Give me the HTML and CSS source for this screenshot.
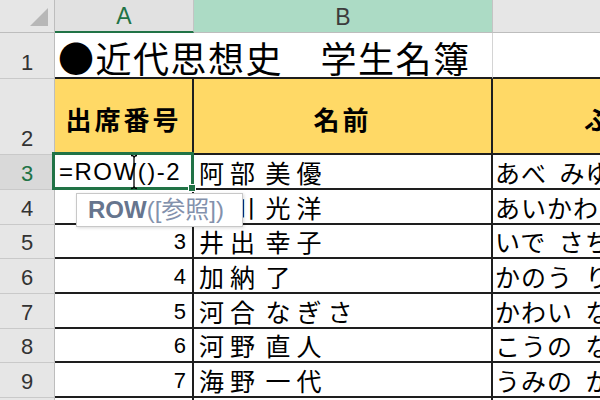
FILE: index.html
```html
<!DOCTYPE html>
<html lang="ja">
<head>
<meta charset="utf-8">
<title>近代思想史 学生名簿</title>
<link rel="stylesheet" href="styles.css">
</head>
<body>
<div class="sheet">
  <div class="corner"><span class="tri"></span></div>
  <div class="colhead active">A</div>
  <div class="colhead hover">B</div>
  <div class="colhead">C</div>

  <div class="rowhead">1</div>
  <div class="title">●近代思想史　学生名簿</div>
  <div class="blank"></div>

  <div class="rowhead">2</div>
  <div class="hd">出席番号</div>
  <div class="hd">名前</div>
  <div class="hd hd-c">ふりがな</div>

  <div class="rowhead active">3</div>
  <div class="num formula">=ROW()-2</div>
  <div class="name">阿部 美優</div>
  <div class="kana">あべ みゆう</div>

  <div class="rowhead">4</div>
  <div class="num"></div>
  <div class="name">相川 光洋</div>
  <div class="kana">あいかわ こうよう</div>

  <div class="rowhead">5</div>
  <div class="num">3</div>
  <div class="name">井出 幸子</div>
  <div class="kana">いで さちこ</div>

  <div class="rowhead">6</div>
  <div class="num">4</div>
  <div class="name">加納 了</div>
  <div class="kana">かのう りょう</div>

  <div class="rowhead">7</div>
  <div class="num">5</div>
  <div class="name">河合 なぎさ</div>
  <div class="kana">かわい なぎさ</div>

  <div class="rowhead">8</div>
  <div class="num">6</div>
  <div class="name">河野 直人</div>
  <div class="kana">こうの なおと</div>

  <div class="rowhead">9</div>
  <div class="num">7</div>
  <div class="name">海野 一代</div>
  <div class="kana">うみの かずよ</div>

  <div class="rowhead">10</div>
  <div class="num"></div>
  <div class="name"></div>
  <div class="kana"></div>

  <div class="active-box"></div>
  <div class="handle"></div>
  <svg class="ibeam" width="10" height="36" viewBox="0 0 10 36">
    <path d="M2 1.5 Q5 1.5 5 4 Q5 1.5 8 1.5 M5 4 V32 M2 34.5 Q5 34.5 5 32 Q5 34.5 8 34.5" fill="none" stroke="#000" stroke-width="1.3"/>
  </svg>
  <div class="tooltip"><b>ROW</b><span class="args">([参照])</span></div>
</div>
</body>
</html>
```

FILE: styles.css
```css
* {
  box-sizing: border-box;
  margin: 0;
  padding: 0;
}

body {
  margin: 0;
  width: 600px;
  height: 400px;
  overflow: hidden;
  background: #fff;
  font-family: "Liberation Sans", "Noto Sans CJK JP", sans-serif;
}

.sheet {
  position: relative;
  display: grid;
  grid-template-columns: 55px 139px 299px 300px;
  grid-template-rows: 33px 46px 76px 35px 35px 34px 35px 35px 34px 35px 35px;
  width: 793px;
}

.corner {
  background: #e6e6e6;
  border-right: 1px solid #bdbdbd;
  border-bottom: 1px solid #bdbdbd;
  display: flex;
  justify-content: flex-end;
  align-items: flex-end;
  padding: 0 6px 6px 0;
}

.tri {
  width: 18px;
  height: 18px;
  background: #b7b7b7;
  clip-path: polygon(100% 0, 100% 100%, 0 100%);
}

.colhead {
  background: #e6e6e6;
  border-right: 1px solid #c4c4c4;
  border-bottom: 1px solid #bdbdbd;
  display: flex;
  justify-content: center;
  align-items: center;
  padding-top: 2px;
  font-size: 23px;
  line-height: 1;
  color: #3c3c3c;
}

.colhead.active {
  color: #217346;
  background: #e1e1e1;
  border-bottom: 2px solid #217346;
}

.colhead.hover {
  background: #acdbc5;
}

.rowhead {
  background: #e6e6e6;
  border-right: 1px solid #bdbdbd;
  border-bottom: 1px solid #c9c9c9;
  display: flex;
  justify-content: center;
  align-items: flex-end;
  padding-bottom: 4px;
  font-size: 22px;
  line-height: 1;
  color: #333;
}

.rowhead.active {
  color: #217346;
  background: #d9d9d9;
}

.title {
  grid-column: 2 / 4;
  border-bottom: 2px solid #1e1e1e;
  border-right: 1px solid #d4d4d4;
  display: flex;
  align-items: flex-end;
  padding: 0 0 2px 3px;
  font-family: "Noto Sans CJK JP", sans-serif;
  font-size: 36px;
  letter-spacing: 1.5px;
  line-height: 1;
  color: #000;
  white-space: nowrap;
}

.blank {
  border-bottom: 2px solid #1e1e1e;
}

.hd {
  background: #ffd966;
  border-right: 2px solid #1e1e1e;
  border-bottom: 2px solid #1e1e1e;
  display: flex;
  align-items: center;
  justify-content: center;
  padding-top: 5px;
  font-family: "Noto Sans CJK JP", sans-serif;
  font-weight: 700;
  font-size: 26px;
  letter-spacing: 3px;
  line-height: 1;
  color: #000;
  white-space: nowrap;
}

.num {
  border-right: 2px solid #1e1e1e;
  border-bottom: 2px solid #1e1e1e;
  display: flex;
  justify-content: flex-end;
  align-items: flex-end;
  padding: 0 6px 4px 0;
  font-size: 22px;
  line-height: 1;
  color: #000;
}

.num.formula {
  justify-content: flex-start;
  padding-left: 4px;
  font-size: 24px;
  letter-spacing: 1.5px;
}

.name,
.kana {
  border-right: 2px solid #1e1e1e;
  border-bottom: 2px solid #1e1e1e;
  display: flex;
  align-items: flex-end;
  padding: 0 0 3px 5px;
  font-family: "Noto Sans CJK JP", sans-serif;
  font-size: 25px;
  line-height: 1;
  color: #000;
  white-space: nowrap;
  overflow: hidden;
}

.name {
  letter-spacing: 6px;
  word-spacing: -7px;
}

.kana {
  padding-left: 2px;
  letter-spacing: 1px;
  word-spacing: 6px;
}

.active-box {
  position: absolute;
  left: 52px;
  top: 152px;
  width: 142px;
  height: 38px;
  border: 3px solid #217346;
}

.handle {
  position: absolute;
  left: 188px;
  top: 184px;
  width: 8px;
  height: 8px;
  background: #217346;
  border: 1px solid #fff;
}

.ibeam {
  position: absolute;
  left: 129px;
  top: 154px;
}

.tooltip {
  position: absolute;
  left: 76px;
  top: 193px;
  width: 167px;
  height: 34px;
  background: #fff;
  border: 1px solid #c8c8c8;
  box-shadow: 1px 1px 3px rgba(0, 0, 0, 0.15);
  display: flex;
  align-items: center;
  padding-left: 11px;
  font-size: 24px;
  line-height: 1;
  color: #8391ac;
  white-space: nowrap;
}

.tooltip b {
  color: #66758e;
}
```
